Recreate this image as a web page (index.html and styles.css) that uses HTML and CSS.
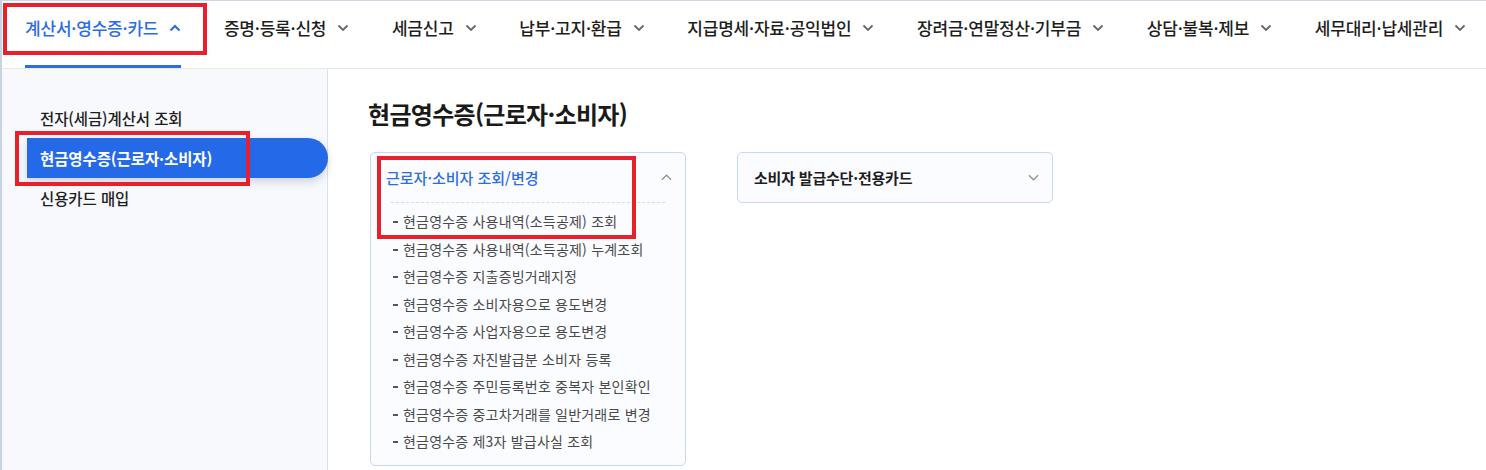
FILE: index.html
```html
<!DOCTYPE html>
<html lang="ko">

<head>
    <meta charset="UTF-8">
    <meta name="viewport" content="width=device-width, initial-scale=1.0">
    <title>현금영수증(근로자·소비자)</title>
    <link rel="stylesheet" href="styles.css">
</head>

<body>
    <div class="page">
        <nav class="gnb">
            <a class="gnb-item active">계산서·영수증·카드
                <svg class="chev" viewBox="0 0 12 8"><path d="M1.5 6.5 6 2l4.5 4.5"/></svg>
            </a>
            <a class="gnb-item">증명·등록·신청
                <svg class="chev" viewBox="0 0 12 8"><path d="M1.5 1.5 6 6l4.5-4.5"/></svg>
            </a>
            <a class="gnb-item">세금신고
                <svg class="chev" viewBox="0 0 12 8"><path d="M1.5 1.5 6 6l4.5-4.5"/></svg>
            </a>
            <a class="gnb-item">납부·고지·환급
                <svg class="chev" viewBox="0 0 12 8"><path d="M1.5 1.5 6 6l4.5-4.5"/></svg>
            </a>
            <a class="gnb-item">지급명세·자료·공익법인
                <svg class="chev" viewBox="0 0 12 8"><path d="M1.5 1.5 6 6l4.5-4.5"/></svg>
            </a>
            <a class="gnb-item">장려금·연말정산·기부금
                <svg class="chev" viewBox="0 0 12 8"><path d="M1.5 1.5 6 6l4.5-4.5"/></svg>
            </a>
            <a class="gnb-item">상담·불복·제보
                <svg class="chev" viewBox="0 0 12 8"><path d="M1.5 1.5 6 6l4.5-4.5"/></svg>
            </a>
            <a class="gnb-item">세무대리·납세관리
                <svg class="chev" viewBox="0 0 12 8"><path d="M1.5 1.5 6 6l4.5-4.5"/></svg>
            </a>
        </nav>

        <div class="body">
            <aside class="lnb">
                <a class="lnb-item">전자(세금)계산서 조회</a>
                <a class="lnb-item on">현금영수증(근로자·소비자)</a>
                <a class="lnb-item">신용카드 매입</a>
            </aside>

            <main class="content">
                <h2 class="title">현금영수증(근로자·소비자)</h2>
                <div class="cards">
                    <div class="card open">
                        <div class="card-head">
                            <span>근로자·소비자 조회/변경</span>
                            <svg class="chev-sm" viewBox="0 0 12 7"><path d="M1 6 6 1l5 5"/></svg>
                        </div>
                        <ul class="menu">
                            <li>현금영수증 사용내역(소득공제) 조회</li>
                            <li>현금영수증 사용내역(소득공제) 누계조회</li>
                            <li>현금영수증 지출증빙거래지정</li>
                            <li>현금영수증 소비자용으로 용도변경</li>
                            <li>현금영수증 사업자용으로 용도변경</li>
                            <li>현금영수증 자진발급분 소비자 등록</li>
                            <li>현금영수증 주민등록번호 중복자 본인확인</li>
                            <li>현금영수증 중고차거래를 일반거래로 변경</li>
                            <li>현금영수증 제3자 발급사실 조회</li>
                        </ul>
                    </div>
                    <div class="card">
                        <div class="card-head plain">
                            <span>소비자 발급수단·전용카드</span>
                            <svg class="chev-sm" viewBox="0 0 12 7"><path d="M1 1l5 5 5-5"/></svg>
                        </div>
                    </div>
                </div>
            </main>
        </div>

        <!-- guide boxes -->
        <div class="mark mark-gnb"></div>
        <div class="mark mark-lnb"></div>
        <div class="mark mark-menu"></div>
    </div>
</body>

</html>
```

FILE: styles.css
```css
body {
    margin: 0;
    font-family: "Noto Sans CJK KR", "Noto Sans", sans-serif;
    color: #222;
    background-color: #fff;
}

a {
    text-decoration: none;
    color: inherit;
}

.page {
    position: relative;
    height: 470px;
    border-top: 1px solid #cdd7e6;
    border-left: 2px solid #c9d3e3;
    box-sizing: border-box;
    display: flex;
    flex-direction: column;
    overflow: hidden;
}

/* top menu */
.gnb {
    display: flex;
    gap: 42.6px;
    height: 67px;
    padding-left: 23px;
    border-bottom: 1px solid #e6e8ec;
}

.gnb-item {
    display: flex;
    align-items: center;
    gap: 11px;
    height: 53px;
    padding-bottom: 11px;
    font-size: 17px;
    font-weight: 500;
    letter-spacing: -0.2px;
    color: #1e1e1e;
    white-space: nowrap;
    border-bottom: 3px solid transparent;
}

.gnb-item.active {
    color: #2c6de4;
    border-bottom-color: #2c6de4;
}

.chev {
    width: 12px;
    height: 8px;
    fill: none;
    stroke: #666;
    stroke-width: 1.8;
}

.gnb-item.active .chev {
    stroke: #2c6de4;
    stroke-width: 2.2;
}

/* body */
.body {
    flex: 1;
    display: flex;
}

.lnb {
    width: 325px;
    background-color: #f7f9fd;
    border-right: 1px solid #d9e2f1;
    padding-top: 29px;
    display: flex;
    flex-direction: column;
}

.lnb-item {
    height: 40px;
    display: flex;
    align-items: center;
    margin-left: 25px;
    padding-left: 13px;
    font-size: 15.5px;
    font-weight: 500;
    letter-spacing: -0.1px;
    color: #1e1e1e;
}

.lnb-item.on {
    background-color: #2469e8;
    color: #fff;
    font-weight: 700;
    margin-right: -1px;
    border-radius: 0 20px 20px 0;
    box-shadow: 0 4px 8px rgba(30, 50, 90, 0.18);
    position: relative;
}

.content {
    flex: 1;
    padding-left: 40px;
}

.title {
    margin: 25px 0 0 0;
    font-size: 24px;
    font-weight: 700;
    letter-spacing: -0.7px;
    color: #1a1a1a;
    line-height: 40px;
}

.cards {
    display: flex;
    align-items: flex-start;
    gap: 51px;
    margin-top: 18px;
    padding-left: 2px;
}

.card {
    width: 314px;
    border: 1px solid #c7d8f4;
    border-radius: 5px;
    background-color: #fbfcff;
}

.card.open {
    height: 312px;
}

.card-head {
    display: flex;
    align-items: center;
    justify-content: space-between;
    height: 49px;
    padding: 0 13px 0 15px;
    font-size: 15px;
    font-weight: 500;
    letter-spacing: 0;
    color: #2c6de4;
}

.card-head.plain {
    padding-left: 16px;
    color: #1e1e1e;
    font-weight: 700;
    letter-spacing: -0.2px;
}

.chev-sm {
    width: 11px;
    height: 7px;
    fill: none;
    stroke: #8a8f99;
    stroke-width: 1.3;
}

.menu {
    list-style: none;
    margin: 0 20px 0 20px;
    padding: 5px 0 0 0;
    border-top: 1px dashed #d4dcea;
}

.menu li {
    position: relative;
    height: 27.5px;
    line-height: 27.5px;
    padding-left: 12px;
    font-size: 14px;
    letter-spacing: 0.2px;
    color: #4a4a4a;
    white-space: nowrap;
}

.menu li::before {
    content: "";
    position: absolute;
    left: 2px;
    top: 13px;
    width: 5px;
    height: 2px;
    background-color: #555;
}

/* red guide boxes drawn over the page */
.mark {
    position: absolute;
    border: 4px solid #e8202b;
    box-sizing: border-box;
}

.mark-gnb {
    left: 1px;
    top: 2px;
    width: 204px;
    height: 52px;
}

.mark-lnb {
    left: 13px;
    top: 130px;
    width: 235px;
    height: 55px;
}

.mark-menu {
    left: 375px;
    top: 155px;
    width: 259px;
    height: 83px;
}
```
